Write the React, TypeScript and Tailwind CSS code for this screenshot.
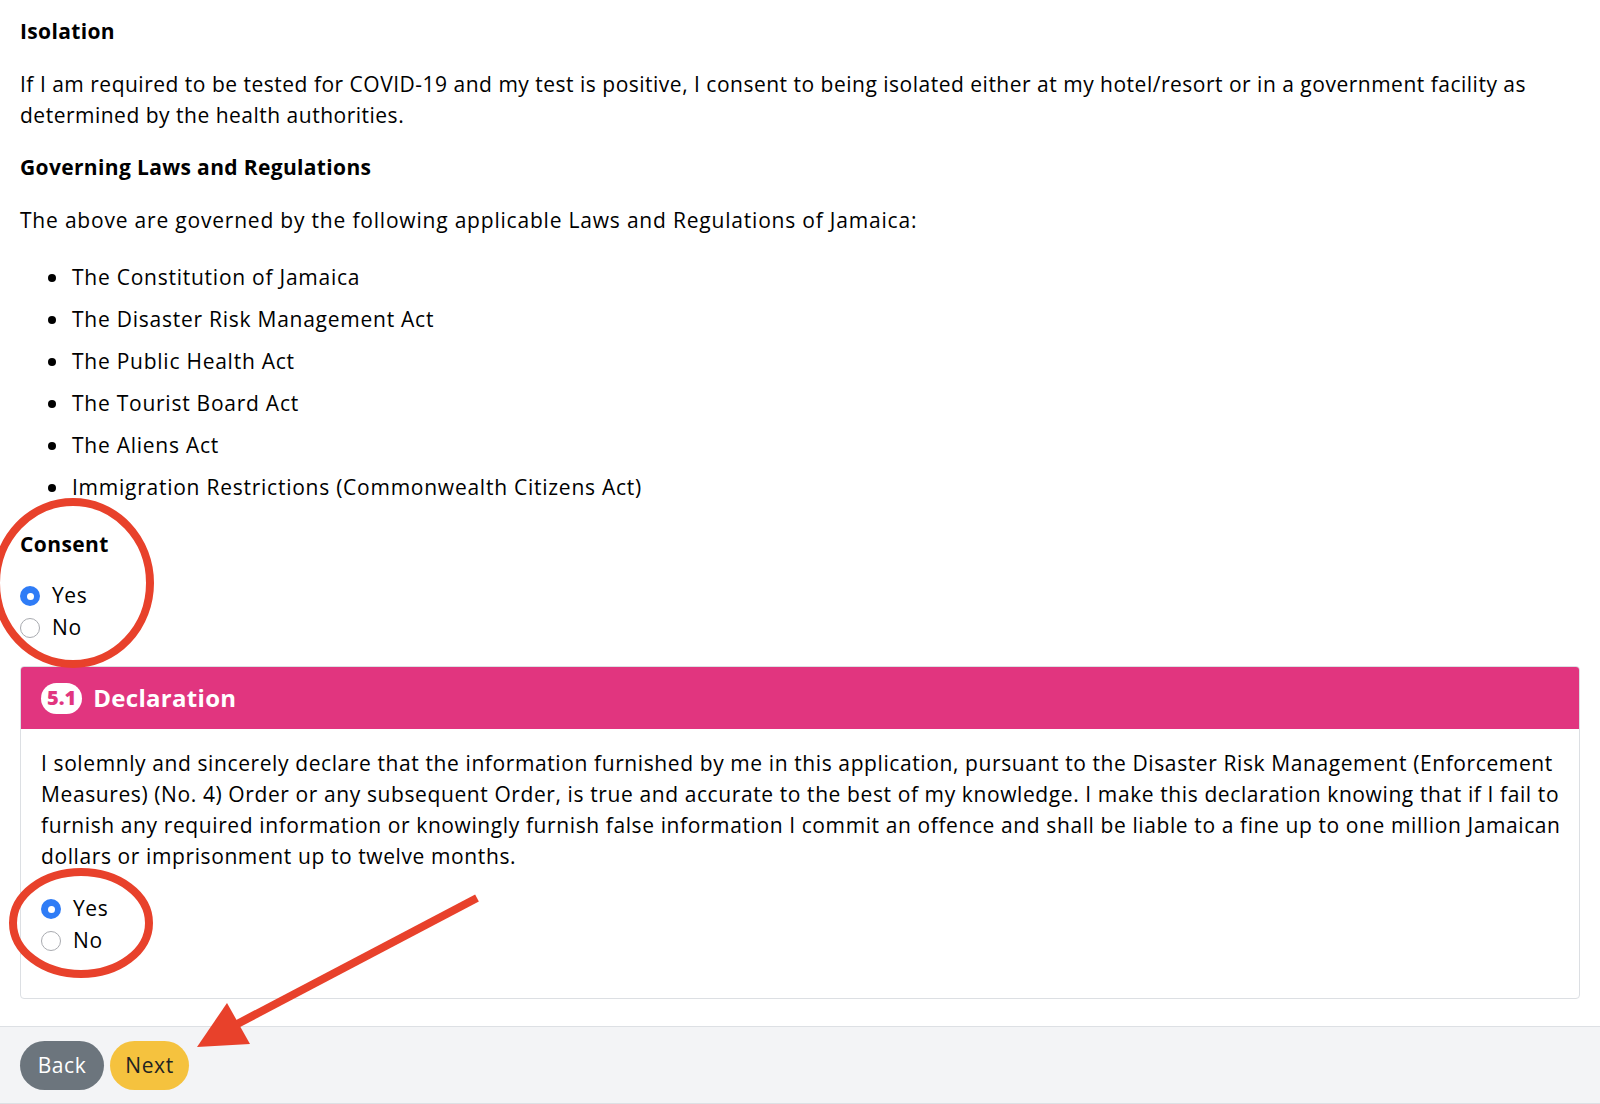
const font = { fontFamily: '"Open Sans", "Liberation Sans", sans-serif' };

const laws = [
  'The Constitution of Jamaica',
  'The Disaster Risk Management Act',
  'The Public Health Act',
  'The Tourist Board Act',
  'The Aliens Act',
  'Immigration Restrictions (Commonwealth Citizens Act)',
];

const declaration = [
  'I solemnly and sincerely declare that the information furnished by me in this application, pursuant to the Disaster Risk Management (Enforcement',
  'Measures) (No. 4) Order or any subsequent Order, is true and accurate to the best of my knowledge. I make this declaration knowing that if I fail to',
  'furnish any required information or knowingly furnish false information I commit an offence and shall be liable to a fine up to one million Jamaican',
  'dollars or imprisonment up to twelve months.',
];

function Radio({ label, checked }: { label: string; checked?: boolean }) {
  return (
    <label className="flex items-center h-[32px] gap-3 text-[21px] tracking-[0.6px] text-black">
      {checked ? (
        <span className="w-[20px] h-[20px] rounded-full bg-[#2f7cf6] flex items-center justify-center">
          <span className="w-[7px] h-[7px] rounded-full bg-white" />
        </span>
      ) : (
        <span className="w-[20px] h-[20px] rounded-full border border-[#a9abb0] bg-white" />
      )}
      <span>{label}</span>
    </label>
  );
}

export default function App() {
  return (
    <div className="relative w-[1600px] h-[1104px] bg-white overflow-hidden text-black" style={font}>
      <div className="px-5 pt-[16px]">
        <h3 className="text-[21px] leading-[31px] font-bold tracking-[0.35px]">Isolation</h3>
        <p className="mt-[22px] text-[21px] leading-[31px] tracking-[0.5px]">
          <span className="block whitespace-nowrap">
            If I am required to be tested for COVID-19 and my test is positive, I consent to being isolated either at my hotel/resort or in a government facility as
          </span>
          <span className="block whitespace-nowrap">determined by the health authorities.</span>
        </p>
        <h3 className="mt-[21px] text-[21px] leading-[31px] font-bold tracking-[0.35px]">Governing Laws and Regulations</h3>
        <p className="mt-[22px] text-[21px] leading-[31px] tracking-[0.8px]">
          The above are governed by the following applicable Laws and Regulations of Jamaica:
        </p>
        <ul className="mt-[26px] flex flex-col gap-[11px] pl-[28px]">
          {laws.map((l) => (
            <li key={l} className="flex items-center gap-[16px] text-[21px] leading-[31px] tracking-[0.75px]">
              <span className="w-[8px] h-[8px] rounded-full bg-black" />
              <span>{l}</span>
            </li>
          ))}
        </ul>
        <h3 className="mt-[26px] text-[21px] leading-[31px] font-bold tracking-[0.4px]">Consent</h3>
        <div className="mt-[20px] flex flex-col">
          <Radio label="Yes" checked />
          <Radio label="No" />
        </div>

        <div className="mt-[22px] border border-[#dcdfe3] rounded-[4px] overflow-hidden">
          <div className="h-[62px] bg-[#e1357f] flex items-center px-5 gap-[11px]">
            <span className="h-[31px] px-[6px] rounded-full bg-white text-[#e1357f] text-[20px] font-extrabold flex items-center">
              5.1
            </span>
            <span className="text-white text-[24px] font-bold tracking-[0.3px]">Declaration</span>
          </div>
          <div className="px-5 pt-[19px] pb-[41px]">
            <p className="text-[21px] leading-[31px] tracking-[0.6px]">
              {declaration.map((line) => (
                <span key={line} className="block whitespace-nowrap">
                  {line}
                </span>
              ))}
            </p>
            <div className="mt-[21px] flex flex-col">
              <Radio label="Yes" checked />
              <Radio label="No" />
            </div>
          </div>
        </div>
      </div>

      <div className="mt-[27px] h-[78px] bg-[#f3f4f6] border-t border-b border-[#dde0e4] flex items-start pt-[14px] px-5 gap-[6px]">
        <button className="h-[49px] w-[84px] rounded-full bg-[#6c757d] text-white text-[21px] tracking-[0.6px]">Back</button>
        <button className="h-[49px] w-[79px] rounded-full bg-[#f5c23e] text-[#222] text-[21px] tracking-[0.6px]">Next</button>
      </div>

      <svg className="absolute inset-0 pointer-events-none" width="1600" height="1104" viewBox="0 0 1600 1104">
        <ellipse cx="73" cy="583" rx="77" ry="81" fill="none" stroke="#e8412b" strokeWidth="8" />
        <ellipse cx="81" cy="923" rx="68" ry="51" fill="none" stroke="#e8412b" strokeWidth="8" />
        <line x1="477" y1="898" x2="222" y2="1032" stroke="#e8412b" strokeWidth="8" />
        <polygon points="197,1047 227,1003 250,1044" fill="#e8412b" />
      </svg>
    </div>
  );
}
